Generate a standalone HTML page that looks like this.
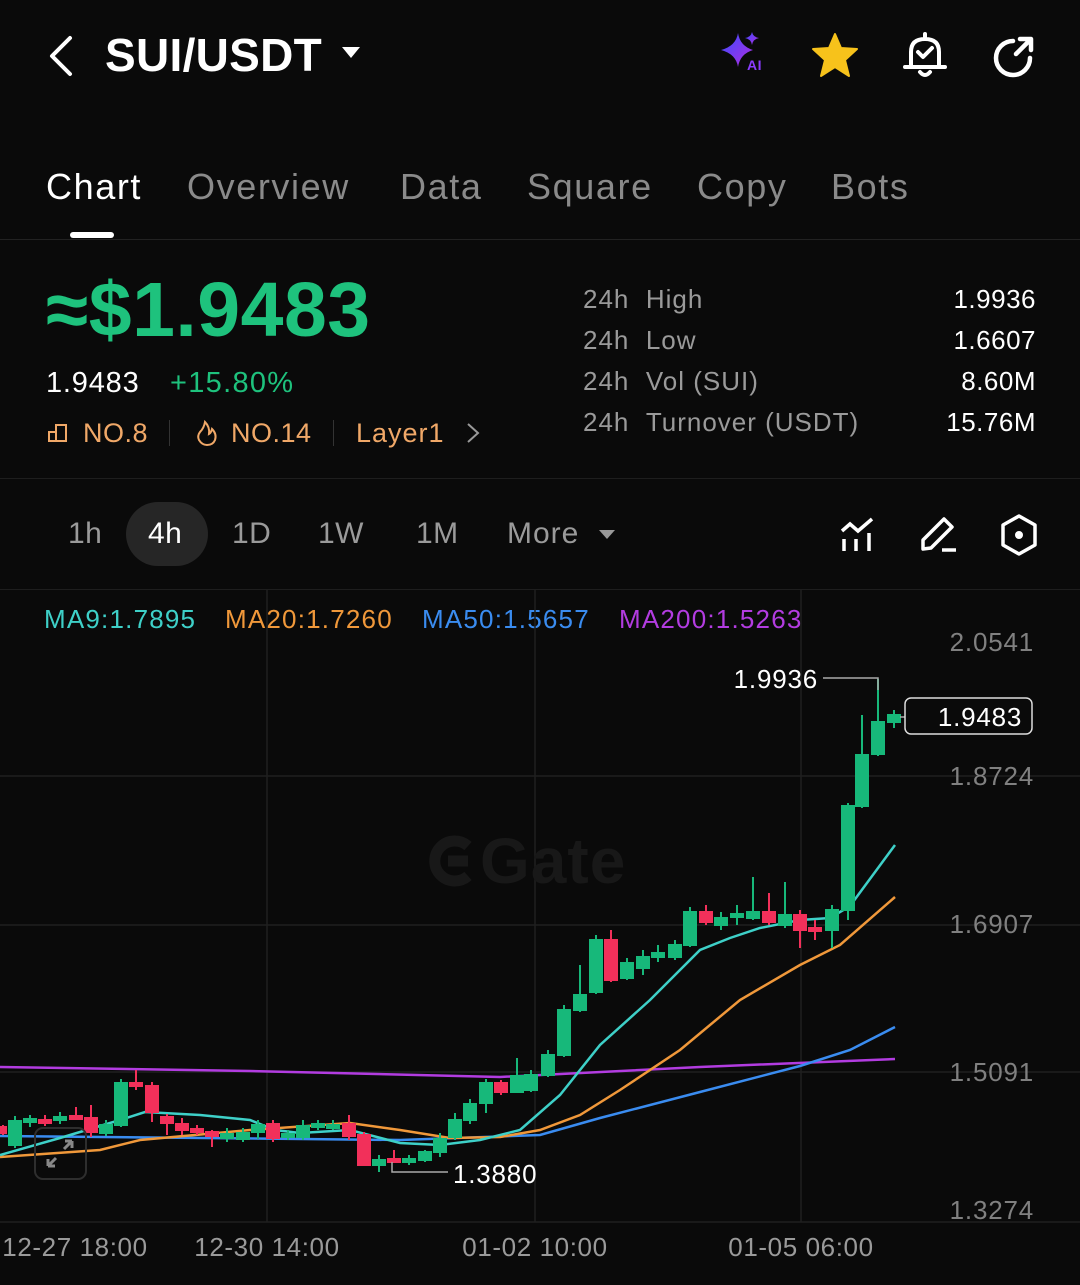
<!DOCTYPE html>
<html><head><meta charset="utf-8"><style>
*{margin:0;padding:0;box-sizing:border-box}
body{width:1080px;height:1285px;background:#0a0a0a;color:#fff;font-family:"Liberation Sans",sans-serif;position:relative;overflow:hidden;letter-spacing:0.5px}
.a{position:absolute;white-space:nowrap}
.tab{font-size:36px;color:#8a8a8a;top:166px;letter-spacing:1.6px}
.g{color:#9a9a9a}
.or{color:#f0a868}
</style></head><body>
<svg class="a" style="left:44px;top:34px" width="34" height="44" viewBox="0 0 34 44"><path d="M26 4 L8 22 L26 40" stroke="#fff" stroke-width="4" fill="none" stroke-linecap="round" stroke-linejoin="round"/></svg>
<div class="a" style="left:105px;top:28px;font-size:46px;font-weight:bold;letter-spacing:0.3px">SUI/USDT</div>
<svg class="a" style="left:341px;top:46px" width="20" height="14"><path d="M1 1 L19 1 L10 12Z" fill="#fff"/></svg>
<svg class="a" style="left:720px;top:30px" width="46" height="44" viewBox="0 0 46 44"><defs><linearGradient id="ai" x1="0" y1="0" x2="1" y2="1"><stop offset="0" stop-color="#3a4cff"/><stop offset="1" stop-color="#b22ce0"/></linearGradient></defs><path d="M18 3 Q20 16 33 20 Q20 24 18 37 Q16 24 1 20 Q16 16 18 3Z" fill="url(#ai)"/><path d="M32 2 Q33 7 39 8 Q33 9 32 15 Q31 9 25 8 Q31 7 32 2Z" fill="url(#ai)"/><text x="27" y="40" font-size="14" font-weight="bold" fill="#8a3cff" font-family="Liberation Sans">AI</text></svg>
<svg class="a" style="left:811px;top:32px" width="48" height="46" viewBox="0 0 48 46"><path d="M24 2 L30 16 L46 17 L34 28 L38 44 L24 35 L10 44 L14 28 L2 17 L18 16Z" fill="#f7c21b" stroke="#f7c21b" stroke-width="2" stroke-linejoin="round"/></svg>
<svg class="a" style="left:900px;top:30px" width="50" height="50" viewBox="0 0 50 50"><path d="M25 4 V8 M11 36 V22 Q11 9 25 9 Q39 9 39 22 V36 M5 37 H45 M20 42 Q25 48 30 42" stroke="#fff" stroke-width="4" fill="none" stroke-linecap="round"/><path d="M18 22 L23 27 L32 18" stroke="#fff" stroke-width="4" fill="none" stroke-linecap="round" stroke-linejoin="round"/></svg>
<svg class="a" style="left:990px;top:34px" width="48" height="46" viewBox="0 0 48 46"><path d="M40 24 A17 17 0 1 1 23 7" stroke="#fff" stroke-width="4.5" fill="none" stroke-linecap="round"/><path d="M26 20 L41 5 M30 5 H41 V16" stroke="#fff" stroke-width="4.5" fill="none" stroke-linecap="round" stroke-linejoin="round"/></svg>

<div class="a tab" style="left:46px;color:#fff">Chart</div>
<div class="a tab" style="left:187px">Overview</div>
<div class="a tab" style="left:400px">Data</div>
<div class="a tab" style="left:527px">Square</div>
<div class="a tab" style="left:697px">Copy</div>
<div class="a tab" style="left:831px">Bots</div>
<div class="a" style="left:70px;top:232px;width:44px;height:6px;border-radius:3px;background:#fff"></div>
<div class="a" style="left:0;top:239px;width:1080px;height:1px;background:#222"></div>

<div class="a" style="left:46px;top:266px;font-size:77px;font-weight:bold;color:#1ec27d;letter-spacing:0.5px">≈$1.9483</div>
<div class="a" style="left:46px;top:367px;font-size:29px;letter-spacing:0.8px">1.9483</div>
<div class="a" style="left:170px;top:367px;font-size:29px;color:#1ec27d;letter-spacing:1.3px">+15.80%</div>
<svg class="a" style="left:46px;top:421px" width="24" height="24" viewBox="0 0 24 24"><path d="M3 20 V11 H10 V20 Z M10 20 V4 H20 V20 H10" stroke="#f0a868" stroke-width="2" fill="none"/></svg>
<div class="a or" style="left:83px;top:418px;font-size:27px">NO.8</div>
<div class="a" style="left:169px;top:420px;width:1px;height:26px;background:#333"></div>
<svg class="a" style="left:195px;top:419px" width="24" height="28" viewBox="0 0 24 28"><path d="M10 3 Q9 9 5 13 Q2 17 4 21 Q7 26 12 26 Q18 26 20 21 Q22 15 17 10 Q16 14 14 15 Q15 8 10 3Z" stroke="#f0a868" stroke-width="2" fill="none"/></svg>
<div class="a or" style="left:231px;top:418px;font-size:27px">NO.14</div>
<div class="a" style="left:333px;top:420px;width:1px;height:26px;background:#333"></div>
<div class="a or" style="left:356px;top:418px;font-size:27px;letter-spacing:1px">Layer1</div>
<svg class="a" style="left:464px;top:422px" width="18" height="22"><path d="M4 2 L14 11 L4 20" stroke="#999" stroke-width="2" fill="none"/></svg>

<div class="a g" style="left:583px;top:284px;font-size:26px;letter-spacing:1px">24h&nbsp;&nbsp;High</div>
<div class="a g" style="left:583px;top:325px;font-size:26px;letter-spacing:1px">24h&nbsp;&nbsp;Low</div>
<div class="a g" style="left:583px;top:366px;font-size:26px;letter-spacing:1px">24h&nbsp;&nbsp;Vol (SUI)</div>
<div class="a g" style="left:583px;top:407px;font-size:26px;letter-spacing:1px">24h&nbsp;&nbsp;Turnover (USDT)</div>
<div class="a" style="right:44px;top:284px;font-size:26px">1.9936</div>
<div class="a" style="right:44px;top:325px;font-size:26px">1.6607</div>
<div class="a" style="right:44px;top:366px;font-size:26px">8.60M</div>
<div class="a" style="right:44px;top:407px;font-size:26px">15.76M</div>
<div class="a" style="left:0;top:478px;width:1080px;height:1px;background:#1e1e1e"></div>

<div class="a" style="left:126px;top:502px;width:82px;height:64px;border-radius:32px;background:#262626"></div>
<div class="a g" style="left:68px;top:517px;font-size:30px">1h</div>
<div class="a" style="left:148px;top:517px;font-size:30px">4h</div>
<div class="a g" style="left:232px;top:517px;font-size:30px">1D</div>
<div class="a g" style="left:318px;top:517px;font-size:30px">1W</div>
<div class="a g" style="left:416px;top:517px;font-size:30px">1M</div>
<div class="a g" style="left:507px;top:517px;font-size:30px;letter-spacing:1px">More</div>
<svg class="a" style="left:598px;top:529px" width="18" height="12"><path d="M1 1 H17 L9 10Z" fill="#999"/></svg>
<svg class="a" style="left:838px;top:515px" width="44" height="40" viewBox="0 0 44 40"><path d="M4 16 L12 9 L20 16 L34 4 M6 24 V36 M18 24 V36 M31 18 V36" stroke="#fff" stroke-width="3.5" fill="none"/></svg>
<svg class="a" style="left:918px;top:512px" width="44" height="44" viewBox="0 0 44 44"><path d="M5 37 L5 28 L26 7 L34 15 L13 36 Z M24 38 H38" stroke="#fff" stroke-width="3.5" fill="none" stroke-linejoin="round"/></svg>
<svg class="a" style="left:998px;top:513px" width="42" height="44" viewBox="0 0 42 44"><path d="M21 3 L37 12 V32 L21 41 L5 32 V12 Z" stroke="#fff" stroke-width="3.5" fill="none" stroke-linejoin="round"/><circle cx="21" cy="22" r="4" fill="#fff"/></svg>
<div class="a" style="left:0;top:589px;width:1080px;height:1px;background:#1e1e1e"></div>

<div class="a" style="left:44px;top:604px;font-size:26px;color:#3ed0c8;letter-spacing:1.2px">MA9:1.7895</div>
<div class="a" style="left:225px;top:604px;font-size:26px;color:#f0983a;letter-spacing:1.2px">MA20:1.7260</div>
<div class="a" style="left:422px;top:604px;font-size:26px;color:#3a8cf0;letter-spacing:1.2px">MA50:1.5657</div>
<div class="a" style="left:619px;top:604px;font-size:26px;color:#b23ce0;letter-spacing:1.2px">MA200:1.5263</div>

<svg class="a" style="left:0;top:0" width="1080" height="1285">
<g stroke="#1f1f1f" stroke-width="1.5"><path d="M0 776 H1080 M0 925 H1080 M0 1072 H1080 M0 1222 H1080 M267 590 V1222 M535 590 V1222 M801 590 V1222"/></g>
<text x="480" y="883" font-size="64" font-weight="bold" fill="#181818" font-family="Liberation Sans" letter-spacing="1">Gate</text>
<path d="M468 846 A20 20 0 1 0 468 876 M448 861 H468" stroke="#181818" stroke-width="11" fill="none"/>
<g font-family="Liberation Sans" font-size="26" fill="#808080" text-anchor="end" letter-spacing="0.8"><text x="1034" y="651">2.0541</text><text x="1034" y="785">1.8724</text><text x="1034" y="933">1.6907</text><text x="1034" y="1081">1.5091</text><text x="1034" y="1219">1.3274</text></g>
<g font-family="Liberation Sans" font-size="26" fill="#9a9a9a" text-anchor="middle" letter-spacing="0.6"><text x="75" y="1256">12-27 18:00</text><text x="267" y="1256">12-30 14:00</text><text x="535" y="1256">01-02 10:00</text><text x="801" y="1256">01-05 06:00</text></g>
<g fill="none" stroke-width="2.5">
<polyline stroke="#b23ce0" points="0,1067 250,1071 500,1077 700,1067 895,1059"/>
<polyline stroke="#3a8cf0" points="0,1136 400,1140 540,1135 600,1118 700,1092 800,1066 850,1050 895,1027"/>
<polyline stroke="#f0983a" points="0,1157 100,1150 140,1140 250,1130 350,1123 400,1130 450,1138 500,1137 540,1130 580,1115 620,1090 680,1050 740,1000 800,965 840,945 895,897"/>
<polyline stroke="#3ed0c8" points="0,1155 60,1138 120,1120 145,1112 200,1115 250,1120 275,1130 300,1133 350,1130 400,1143 440,1145 480,1140 520,1130 560,1095 600,1045 650,1000 700,950 730,938 760,928 800,920 830,918 850,906 895,845"/>
</g>
<g fill="#17b87a" stroke="#17b87a" stroke-width="2">
<path d="M15 1116V1148M30 1115V1127M60 1112V1124M106 1120V1136M121 1079V1127M227 1128V1142M243 1128V1142M258 1120V1139M288 1130V1140M303 1120V1140M318 1120V1130M333 1120V1130M379 1155V1172M409 1155V1165M425 1150V1162M440 1133V1157M455 1113V1140M470 1099V1124M486 1079V1113M517 1058V1092M531 1070V1092M548 1050V1077M564 1005V1057M580 965V1012M596 935V994M627 958V980M643 950V975M658 945V962M675 940V960M690 907V947M721 912V930M737 905V925M753 877V920M785 882V928M832 905V948M848 803V920M862 715V808M878 679V756M894 710V728"/>
<rect x="9" y="1121" width="12" height="24"/><rect x="24" y="1119" width="12" height="3"/><rect x="54" y="1117" width="12" height="3"/><rect x="100" y="1125" width="12" height="8"/><rect x="115" y="1083" width="12" height="42"/><rect x="221" y="1134" width="12" height="4"/><rect x="237" y="1133" width="12" height="6"/><rect x="252" y="1125" width="12" height="7"/><rect x="282" y="1134" width="12" height="3"/><rect x="297" y="1126" width="12" height="11"/><rect x="312" y="1124" width="12" height="3"/><rect x="327" y="1125" width="12" height="3"/><rect x="373" y="1160" width="12" height="5"/><rect x="403" y="1159" width="12" height="3"/><rect x="419" y="1152" width="12" height="8"/><rect x="434" y="1139" width="12" height="13"/><rect x="449" y="1120" width="12" height="17"/><rect x="464" y="1104" width="12" height="16"/><rect x="480" y="1083" width="12" height="20"/><rect x="511" y="1076" width="12" height="16"/><rect x="525" y="1075" width="12" height="15"/><rect x="542" y="1055" width="12" height="20"/><rect x="558" y="1010" width="12" height="45"/><rect x="574" y="995" width="12" height="15"/><rect x="590" y="940" width="12" height="52"/><rect x="621" y="963" width="12" height="15"/><rect x="637" y="957" width="12" height="11"/><rect x="652" y="953" width="12" height="4"/><rect x="669" y="945" width="12" height="12"/><rect x="684" y="912" width="12" height="33"/><rect x="715" y="918" width="12" height="7"/><rect x="731" y="914" width="12" height="3"/><rect x="747" y="912" width="12" height="6"/><rect x="779" y="915" width="12" height="10"/><rect x="826" y="910" width="12" height="20"/><rect x="842" y="806" width="12" height="104"/><rect x="856" y="755" width="12" height="51"/><rect x="872" y="722" width="12" height="32"/><rect x="888" y="715" width="12" height="7"/>
</g>
<g fill="#f2305a" stroke="#f2305a" stroke-width="2">
<path d="M3 1125V1135M45 1115V1126M76 1107V1120M91 1105V1137M136 1070V1090M152 1082V1122M167 1114V1135M182 1118V1135M197 1125V1135M212 1130V1147M273 1120V1142M349 1115V1140M364 1132V1165M394 1150V1163M501 1080V1095M611 930V982M706 905V925M769 893V925M800 910V948M815 920V940"/>
<rect x="0" y="1127" width="6" height="6"/><rect x="39" y="1120" width="12" height="3"/><rect x="70" y="1116" width="12" height="3"/><rect x="85" y="1118" width="12" height="14"/><rect x="130" y="1083" width="12" height="3"/><rect x="146" y="1086" width="12" height="26"/><rect x="161" y="1117" width="12" height="6"/><rect x="176" y="1124" width="12" height="6"/><rect x="191" y="1129" width="12" height="3"/><rect x="206" y="1132" width="12" height="4"/><rect x="267" y="1124" width="12" height="14"/><rect x="343" y="1124" width="12" height="12"/><rect x="358" y="1135" width="12" height="30"/><rect x="388" y="1159" width="12" height="3"/><rect x="495" y="1083" width="12" height="9"/><rect x="605" y="940" width="12" height="40"/><rect x="700" y="912" width="12" height="10"/><rect x="763" y="912" width="12" height="10"/><rect x="794" y="915" width="12" height="15"/><rect x="809" y="928" width="12" height="3"/>
</g>
<path d="M823 678 H878 V690" stroke="#aaa" stroke-width="1.5" fill="none"/>
<text x="818" y="688" font-size="26" fill="#fff" text-anchor="end" font-family="Liberation Sans" letter-spacing="0.8">1.9936</text>
<path d="M392 1162 V1172 H448" stroke="#aaa" stroke-width="1.5" fill="none"/>
<text x="453" y="1183" font-size="26" fill="#fff" font-family="Liberation Sans" letter-spacing="0.8">1.3880</text>
<path d="M900 717 H905" stroke="#aaa" stroke-width="1.5"/>
<rect x="905" y="698" width="127" height="36" rx="6" fill="#0a0a0a" stroke="#ddd" stroke-width="1.5"/>
<text x="980" y="726" font-size="26" fill="#fff" text-anchor="middle" font-family="Liberation Sans" letter-spacing="0.8">1.9483</text>
<rect x="35" y="1128" width="51" height="51" rx="8" fill="none" stroke="#2e2e2e" stroke-width="2"/>
<path d="M48 1166 L56 1158 M48 1166 V1159 M48 1166 H55 M72 1141 L64 1149 M72 1141 V1148 M72 1141 H65" stroke="#888" stroke-width="3" fill="none"/>
</svg>
</body></html>
